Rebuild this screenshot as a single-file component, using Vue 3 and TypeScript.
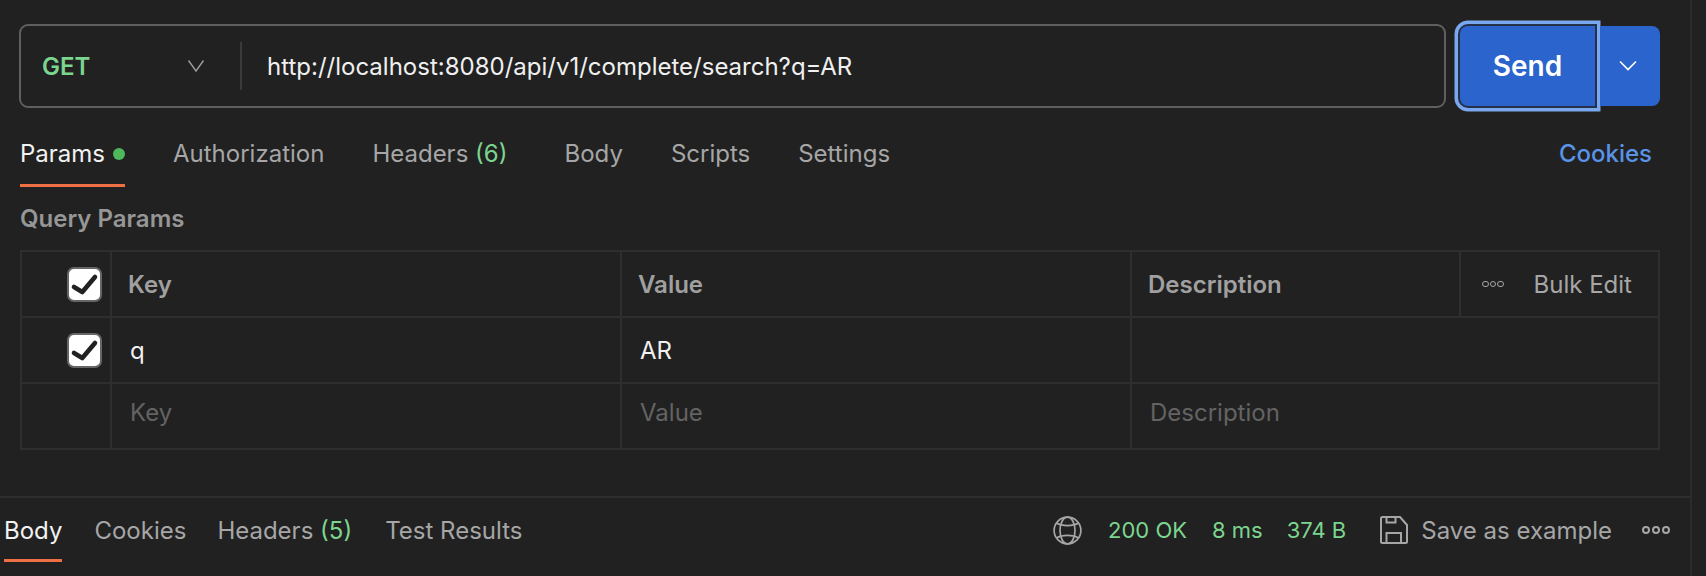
<script setup lang="ts">
interface Tab {
  label: string
  count?: number
  gap: number
}

const requestTabs: Tab[] = [
  { label: 'Authorization', gap: 48 },
  { label: 'Headers', count: 6, gap: 57 },
  { label: 'Body', gap: 48 },
  { label: 'Scripts', gap: 48 },
  { label: 'Settings', gap: 0 },
]

const responseTabs: Tab[] = [
  { label: 'Cookies', gap: 31 },
  { label: 'Headers', count: 5, gap: 33 },
  { label: 'Test Results', gap: 0 },
]
</script>

<template>
  <div class="app">
    <div class="pane">
      <div class="request-row">
        <div class="url-box">
          <div class="method">
            <span class="method-name">GET</span>
            <svg class="method-chevron" width="18" height="18" viewBox="0 0 18 18">
              <path d="M1.5 3.5 L9 14 L16.5 3.5" fill="none" stroke="#9c9c9c" stroke-width="1.4" />
            </svg>
          </div>
          <span class="url">http://localhost:8080/api/v1/complete/search?q=AR</span>
        </div>
        <button class="send">Send</button>
        <button class="send-more">
          <svg width="18" height="12" viewBox="0 0 18 12">
            <path d="M1 1.5 L9 9.5 L17 1.5" fill="none" stroke="#fff" stroke-width="1.6" />
          </svg>
        </button>
      </div>

      <div class="tabs request-tabs">
        <div class="tab active params-tab">
          Params
          <span class="dot"></span>
        </div>
        <div
          v-for="tab in requestTabs"
          :key="tab.label"
          class="tab"
          :style="{ marginRight: tab.gap + 'px' }"
        >
          {{ tab.label }}
          <span v-if="tab.count" class="count">({{ tab.count }})</span>
        </div>
        <a class="cookies">Cookies</a>
      </div>

      <div class="section-title">Query Params</div>

      <div class="table">
        <div class="cell check">
          <span class="checkbox">
            <svg width="31" height="31" viewBox="2 2 31 31">
              <path d="M7 20 L15.3 25 L28 10" fill="none" stroke="#212121" stroke-width="4.6" stroke-linecap="round" stroke-linejoin="round" />
            </svg>
          </span>
        </div>
        <div class="cell head">Key</div>
        <div class="cell head">Value</div>
        <div class="cell head">Description</div>
        <div class="cell bulk">
          <span class="dots small"><i></i><i></i><i></i></span>
          <span>Bulk Edit</span>
        </div>

        <div class="cell check">
          <span class="checkbox">
            <svg width="31" height="31" viewBox="2 2 31 31">
              <path d="M7 20 L15.3 25 L28 10" fill="none" stroke="#212121" stroke-width="4.6" stroke-linecap="round" stroke-linejoin="round" />
            </svg>
          </span>
        </div>
        <div class="cell value">q</div>
        <div class="cell value">AR</div>
        <div class="cell wide"></div>

        <div class="cell check"></div>
        <div class="cell placeholder">Key</div>
        <div class="cell placeholder">Value</div>
        <div class="cell placeholder wide">Description</div>
      </div>

      <div class="response-bar">
        <div class="tabs response-tabs">
          <div class="tab active body-tab">Body</div>
          <div
            v-for="tab in responseTabs"
            :key="tab.label"
            class="tab"
            :style="{ marginRight: tab.gap + 'px' }"
          >
            {{ tab.label }}
            <span v-if="tab.count" class="count">({{ tab.count }})</span>
          </div>
        </div>
        <div class="status">
          <svg class="globe" width="29" height="29" viewBox="0 0 29 29" fill="none" stroke="#a6a6a6" stroke-width="1.7">
            <circle cx="14.5" cy="14.5" r="13.4" />
            <ellipse cx="14.5" cy="14.5" rx="7.5" ry="13.4" />
            <path d="M3.5 7 C9 10.5 20 10.5 25.5 7 M3.5 22 C9 18.5 20 18.5 25.5 22" />
          </svg>
          <span class="ok first">200 OK</span>
          <span class="ok ms">8 ms</span>
          <span class="ok size">374 B</span>
          <svg class="floppy" width="28" height="28" viewBox="0 0 28 28" fill="none" stroke="#a6a6a6" stroke-width="2">
            <path d="M1 2.5 Q1 1 2.5 1 H20 L27 9 V25.5 Q27 27 25.5 27 H2.5 Q1 27 1 25.5 Z" />
            <path d="M6.5 1 V6.5 H15.5 V1" />
            <path d="M6.5 27 V17 H21 V27" />
          </svg>
          <span class="save">Save as example</span>
          <span class="dots"><i></i><i></i><i></i></span>
        </div>
      </div>
    </div>
  </div>
</template>

<style scoped>
.app {
  width: 1706px;
  height: 576px;
  overflow: hidden;
  background: #212121;
  color: #a6a6a6;
  font-family: Inter, "Liberation Sans", sans-serif;
  font-size: 24px;
}

.pane {
  width: 1692px;
  height: 576px;
  border-right: 2px solid #2b2b2b;
  box-sizing: border-box;
  display: flex;
  flex-direction: column;
}

.request-row {
  display: flex;
  align-items: center;
  height: 84px;
  margin-top: 24px;
  padding-left: 19px;
}

.url-box {
  width: 1427px;
  height: 84px;
  box-sizing: border-box;
  border: 2px solid #5f5f5f;
  border-radius: 9px;
  display: flex;
  align-items: center;
}

.method {
  width: 221px;
  height: 48px;
  box-sizing: border-box;
  border-right: 2px solid #3a3a3a;
  padding-left: 21px;
  display: flex;
  align-items: center;
}

.method-name {
  color: #7cd58f;
  font-weight: 600;
  width: 145px;
  padding-top: 1px;
}

.url {
  color: #f0f0f0;
  margin-left: 25px;
}

button {
  border: none;
  font-family: inherit;
  color: #fff;
  background: #2a64cc;
  padding: 0;
}

.send {
  width: 135px;
  height: 80px;
  margin-left: 14px;
  border-radius: 8px 0 0 8px;
  font-size: 28px;
  font-weight: 600;
  box-shadow: 0 0 0 2px #25304a, 0 0 0 5.5px #7aa8ee;
}

.send-more {
  width: 60px;
  height: 80px;
  margin-left: 5px;
  padding-right: 4px;
  border-radius: 0 8px 8px 0;
  display: flex;
  align-items: center;
  justify-content: center;
}

.tabs {
  display: flex;
}

.tab.active {
  color: #f2f2f2;
}

.count {
  color: #7cd58f;
}

.request-tabs {
  align-items: flex-start;
  height: 62px;
  margin-top: 17px;
  padding-left: 20px;
  line-height: 58px;
}

.params-tab {
  display: flex;
  align-items: center;
  gap: 8px;
  margin-right: 48px;
  height: 62px;
  border-bottom: 3px solid #ef7044;
  box-sizing: border-box;
  padding-bottom: 1px;
}

.dot {
  width: 12px;
  height: 12px;
  border-radius: 50%;
  background: #4fb85c;
}

.cookies {
  margin-left: auto;
  margin-right: 38px;
  color: #5a93e6;
  font-weight: 500;
}

.section-title {
  margin: 17px 0 0 20px;
  font-weight: 600;
  color: #969696;
  line-height: 30px;
}

.table {
  display: grid;
  grid-template-columns: 90px 510px 510px 329px 199px;
  grid-auto-rows: 66px;
  width: 1640px;
  margin: 16px 0 0 20px;
  box-sizing: border-box;
  border-top: 2px solid #2f2f2f;
  border-left: 2px solid #2f2f2f;
}

.cell {
  box-sizing: border-box;
  border-right: 2px solid #2f2f2f;
  border-bottom: 2px solid #2f2f2f;
  display: flex;
  align-items: center;
  padding-left: 18px;
}

.cell.wide {
  grid-column: span 2;
}

.cell.check {
  padding: 0 8px 0 0;
  justify-content: flex-end;
}

.checkbox {
  width: 35px;
  height: 35px;
  box-sizing: border-box;
  background: #fff;
  border: 2px solid #666;
  border-radius: 7px;
  display: flex;
  align-items: center;
  justify-content: center;
}

.head {
  font-weight: 600;
  color: #a0a0a0;
  padding-left: 16px;
}

.value {
  color: #f0f0f0;
}

.placeholder {
  color: #636363;
  padding-bottom: 7px;
}

.bulk {
  padding-left: 21px;
  gap: 30px;
}

.dots {
  display: inline-flex;
  gap: 2px;
}

.dots i {
  width: 8px;
  height: 8px;
  box-sizing: border-box;
  border: 2px solid #a6a6a6;
  border-radius: 50%;
}

.dots.small {
  gap: 1px;
}

.dots.small i {
  width: 6.5px;
  height: 6.5px;
  border-width: 1.5px;
}

.response-bar {
  margin-top: 46px;
  height: 66px;
  border-top: 2px solid #2f2f2f;
  display: flex;
  justify-content: space-between;
}

.response-tabs {
  padding-left: 4px;
}

.response-tabs .tab {
  padding-top: 18px;
}

.body-tab {
  height: 64px;
  box-sizing: border-box;
  border-bottom: 3px solid #ef7044;
  margin-right: 32px;
}

.status {
  display: flex;
  align-items: center;
  height: 64px;
  padding-right: 20px;
}

.ok {
  color: #7cd58f;
  font-size: 22px;
}

.ok.first {
  margin-left: 26px;
}

.ok.ms {
  margin-left: 25px;
}

.ok.size {
  margin-left: 24px;
}

.floppy {
  margin-left: 34px;
}

.save {
  margin-left: 13px;
  margin-right: 30px;
}
</style>
